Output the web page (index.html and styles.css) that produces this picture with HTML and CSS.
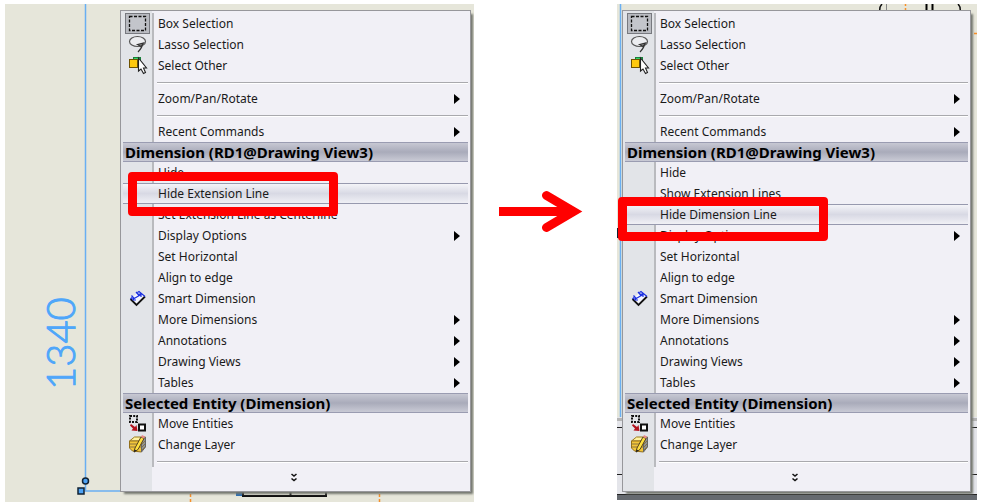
FILE: index.html
```
<!DOCTYPE html>
<html lang="en">
<head>
  <meta charset="UTF-8" />
  <meta name="viewport" content="width=device-width, initial-scale=1.0"/>
  <title>Hide Dimension Line</title>
  <link rel="stylesheet" href="styles.css">
</head>
<body>
  <!-- Shared icons -->
  <svg class="sprite" aria-hidden="true">
    <symbol id="box" viewBox="0 0 25 21">
      <rect x="0.5" y="0.5" width="24" height="20" fill="#b9bbc1" stroke="#77797f"/>
      <rect x="4.500" y="3.500" width="16" height="14" fill="#c3c5cb" stroke="#111" stroke-width="1.300" stroke-dasharray="3 1.500"/>
    </symbol>
    <symbol id="lasso" viewBox="0 0 25 21">
      <ellipse cx="12.500" cy="7.500" rx="8" ry="5" fill="#ecedf0" stroke="#555" stroke-width="1.200"/>
      <path d="M12.500 10.500l6-1.500-2.500 3.500zM17.500 9.500c0 3-2 6-4.500 8.500" fill="#888" stroke="#333" stroke-width="1.200"/>
    </symbol>
    <symbol id="other" viewBox="0 0 25 21">
      <rect x="8.500" y="2.500" width="7" height="8" fill="#35d467" stroke="#18823b"/>
      <rect x="4.500" y="4.500" width="8" height="8" fill="#ffc90e" stroke="#6e5200"/>
      <path d="M13.500 3v13l2.500-2 2.500 4.500 2-1-2-4.500h3z" fill="#fff" stroke="#222" stroke-width="1.100"/>
    </symbol>
    <symbol id="smart" viewBox="0 0 25 21">
      <path d="M5.500 11L14 3.500l6 5-8.500 8.500z" fill="#f5f6ff"/>
      <path d="M20 8.500L11.500 17l-6-6" fill="none" stroke="#111" stroke-width="1.800"/>
      <path d="M5.500 11L7 9.500M12.500 4.500L14 3.500l6 5M7.500 11.500L16 6.500M6.500 7.500l3 3.500M11 4l3.500 4M8 9v3h3M13 6h3v3" fill="none" stroke="#1a2fe0" stroke-width="1.200"/>
    </symbol>
    <symbol id="move" viewBox="0 0 25 21">
      <rect x="5" y="3" width="7" height="6" fill="none" stroke="#111" stroke-width="2" stroke-dasharray="2 1.200"/>
      <path d="M6 11l4 3 1.500-2 1 6-6-.5 1.500-2-3-3z" fill="#b3121d"/>
      <rect x="14" y="11.500" width="6" height="6" fill="#fff" stroke="#111" stroke-width="2"/>
    </symbol>
    <symbol id="layer" viewBox="0 0 25 21">
      <path d="M4.500 7l5-4h11l-4 4z" fill="#fff2a0" stroke="#9b7a1d"/>
      <path d="M4.500 7h12v11l-9-1-3-3z" fill="#f3c63a" stroke="#94701a"/>
      <path d="M16.500 7l4-4v10l-4 5z" fill="#8e9296" stroke="#666"/>
      <path d="M5 10h11M5 13h11M17 10l3-3M17 13l3-3M17 16l3-3" stroke="#8a7440"/>
      <path d="M9 18l1-4 6-11 3 1.500-6 11z" fill="#ffdf3e" stroke="#56421a"/>
      <path d="M16 3l1-2 3 1.500-1 2z" fill="#e88a8a"/>
      <path d="M9 18.500l.5-3 2 1z" fill="#222"/>
    </symbol>
    <symbol id="more" viewBox="0 0 8 10">
      <path d="M1.500 1L4 3l2.500-2M1.500 5.500L4 7.500l2.500-2" fill="none" stroke="#111" stroke-width="1.600"/>
    </symbol>
  </svg>

  <main class="steps">
    <section class="drawing before">
      <svg class="sheet" width="469" height="498">
        <path d="M80.500 0v487H116" fill="none" stroke="#69aff2" stroke-width="1.500"/>
        <circle cx="80.500" cy="477" r="3" fill="#4ea3f5" stroke="#123" stroke-width="1.500"/>
        <rect x="73" y="484" width="6" height="6" fill="#4ea3f5" stroke="#123" stroke-width="1.500"/>
        <text class="dim-value" transform="translate(70 386) rotate(-90)">1340</text>
        <path d="M185.500 490v3M185.500 495v3M374.500 490v3M374.500 495v3" stroke="#f7902a" stroke-width="1.500"/>
        <rect x="231" y="486" width="7" height="6" fill="#2c6fb5"/>
        <path d="M238 484v8h83v-8M285.500 484v8" fill="none" stroke="#111" stroke-width="2"/>
      </svg>
      <ul class="menu">
        <li><button class="item"><svg class="icon"><use href="#box"/></svg>Box Selection</button></li>
        <li><button class="item"><svg class="icon"><use href="#lasso"/></svg>Lasso Selection</button></li>
        <li><button class="item"><svg class="icon"><use href="#other"/></svg>Select Other</button></li>
        <li class="separator"></li>
        <li><button class="item submenu">Zoom/Pan/Rotate</button></li>
        <li class="separator"></li>
        <li><button class="item submenu">Recent Commands</button></li>
        <li class="heading">Dimension (RD1@Drawing View3)</li>
        <li><button class="item">Hide</button></li>
        <li class="marked"><button class="item active">Hide Extension Line</button></li>
        <li><button class="item">Set Extension Line as Centerline</button></li>
        <li><button class="item submenu">Display Options</button></li>
        <li><button class="item">Set Horizontal</button></li>
        <li><button class="item">Align to edge</button></li>
        <li><button class="item"><svg class="icon"><use href="#smart"/></svg>Smart Dimension</button></li>
        <li><button class="item submenu">More Dimensions</button></li>
        <li><button class="item submenu">Annotations</button></li>
        <li><button class="item submenu">Drawing Views</button></li>
        <li><button class="item submenu">Tables</button></li>
        <li class="heading">Selected Entity (Dimension)</li>
        <li><button class="item"><svg class="icon"><use href="#move"/></svg>Move Entities</button></li>
        <li><button class="item"><svg class="icon"><use href="#layer"/></svg>Change Layer</button></li>
        <li class="separator"></li>
        <li><button class="expand" aria-label="Show more"><svg width="8" height="10"><use href="#more"/></svg></button></li>
      </ul>
    </section>

    <svg class="arrow" width="84" height="42" viewBox="0 0 84 42">
      <path d="M0 21.500h72" stroke="#f00" stroke-width="9"/>
      <path d="M47.500 5.500l27 16-27 16" fill="none" stroke="#f00" stroke-width="9" stroke-linecap="round"/>
    </svg>

    <section class="drawing after">
      <svg class="sheet" width="360" height="496">
        <path d="M3.500 0v413" stroke="#69aff2" stroke-width="1.500"/>
        <path d="M265 0q-3 3-2 8M341 0q3 3 2 8" fill="none" stroke="#111" stroke-width="1.500"/>
        <path d="M269.500 0v8" stroke="#888"/>
        <path d="M309.500 0v8M315.500 0v8" stroke="#000" stroke-width="2"/>
        <path d="M288.500 0v2M288.500 4v3M357 29.500h3" stroke="#f7902a" stroke-width="1.500"/>
        <rect x="0" y="224" width="4" height="10" fill="#123"/>
        <rect x="0" y="413" width="360" height="83" fill="#e4e5ea"/>
        <path d="M0 415.500h360" stroke="#b5b5b5" stroke-width="3"/>
        <path d="M0 423.500h360M0 470.500h360" stroke="#222"/>
        <rect x="0" y="490" width="360" height="6" fill="#666a70"/>
        <path d="M0 490.500h360" stroke="#222"/>
      </svg>
      <ul class="menu">
        <li><button class="item"><svg class="icon"><use href="#box"/></svg>Box Selection</button></li>
        <li><button class="item"><svg class="icon"><use href="#lasso"/></svg>Lasso Selection</button></li>
        <li><button class="item"><svg class="icon"><use href="#other"/></svg>Select Other</button></li>
        <li class="separator"></li>
        <li><button class="item submenu">Zoom/Pan/Rotate</button></li>
        <li class="separator"></li>
        <li><button class="item submenu">Recent Commands</button></li>
        <li class="heading">Dimension (RD1@Drawing View3)</li>
        <li><button class="item">Hide</button></li>
        <li><button class="item">Show Extension Lines</button></li>
        <li class="marked"><button class="item active">Hide Dimension Line</button></li>
        <li><button class="item submenu">Display Options</button></li>
        <li><button class="item">Set Horizontal</button></li>
        <li><button class="item">Align to edge</button></li>
        <li><button class="item"><svg class="icon"><use href="#smart"/></svg>Smart Dimension</button></li>
        <li><button class="item submenu">More Dimensions</button></li>
        <li><button class="item submenu">Annotations</button></li>
        <li><button class="item submenu">Drawing Views</button></li>
        <li><button class="item submenu">Tables</button></li>
        <li class="heading">Selected Entity (Dimension)</li>
        <li><button class="item"><svg class="icon"><use href="#move"/></svg>Move Entities</button></li>
        <li><button class="item"><svg class="icon"><use href="#layer"/></svg>Change Layer</button></li>
        <li class="separator"></li>
        <li><button class="expand" aria-label="Show more"><svg width="8" height="10"><use href="#more"/></svg></button></li>
      </ul>
    </section>
  </main>
</body>
</html>
```
FILE: styles.css
```
*,
*::before,
*::after {
  box-sizing: border-box;
}

body {
  margin: 0;
  background-color: #fff;
  font-family: "Noto Sans", "Open Sans", sans-serif;
  color: #1a1a1a;
}

.sprite {
  display: none;
}

.steps {
  display: grid;
  grid-template-columns: 469fr 143fr 360fr;
  align-items: start;
  padding: 4px 4px 0 5px;
}

.drawing {
  position: relative;
  overflow: hidden;
  background-color: #e6e6da;
}

.before {
  padding: 6px 3px 10px 115px;
}

.after {
  padding: 6px 6px 8px 5px;
}

/* model geometry lying behind the menu */
.sheet {
  position: absolute;
  top: 0;
  left: 0;
}

.dim-value {
  font-family: Lato, sans-serif;
  font-size: 40px;
  font-weight: 300;
  fill: #4ea6fa;
  stroke: #4ea6fa;
  stroke-width: 1px;
}

.arrow {
  justify-self: center;
  margin-top: 186px;
  margin-right: 10px;
}

.menu {
  position: relative;
  margin: 0;
  padding: 2px;
  list-style: none;
  border: 1px solid #97979b;
  background: linear-gradient(to right, #e2e4e8 31px, #f1f0f6 31px);
  box-shadow: 3px 3px 2px -1px #73766f;
}

.item {
  position: relative;
  display: flex;
  align-items: center;
  width: 100%;
  height: 21px;
  padding: 0 0 0 35px;
  border: 0;
  background: linear-gradient(to right, transparent 29px, #b9babe 29px, #b9babe 31px, transparent 31px);
  font-family: inherit;
  font-size: 12px;
  color: inherit;
  text-align: left;
  white-space: nowrap;
}

.icon {
  width: 25px;
  height: 21px;
  margin-left: -33px;
  margin-right: 8px;
}

.submenu::after {
  content: "";
  margin-left: auto;
  margin-right: 8px;
  border: 5px solid transparent;
  border-left: 6px solid #000;
  border-right: 0;
}

.active {
  border-top: 1px solid #9799ae;
  border-bottom: 1px solid #9799ae;
  background: linear-gradient(#f4f4f8, #d8d9e4 50%, #f0f0f5);
}

.separator {
  height: 12px;
  padding: 6px 0 0 34px;
  background: linear-gradient(to right, transparent 29px, #b9babe 29px, #b9babe 31px, transparent 31px);
}

.separator::before {
  content: "";
  display: block;
  border-top: 1px solid #a9a9ad;
  border-bottom: 1px solid #fff;
}

.heading {
  height: 20px;
  padding-left: 2px;
  border-top: 1px solid #9a9cb1;
  border-bottom: 1px solid #9a9cb1;
  background: linear-gradient(#c7c8d3, #a9abba 50%, #c9cad5);
  font-size: 15px;
  font-weight: 700;
  line-height: 18px;
  color: #000;
  white-space: nowrap;
}

.expand {
  display: flex;
  align-items: center;
  justify-content: center;
  width: 100%;
  height: 22px;
  padding: 0 4px 0 0;
  border: 0;
  background: none;
}

/* red marker round the command to pick */
.marked {
  position: relative;
  z-index: 1;
}

.marked::after {
  content: "";
  position: absolute;
  top: -11px;
  left: 5px;
  width: 210px;
  height: 44px;
  border: 9px solid #f00;
  border-radius: 4px;
}

.after .marked::after {
  top: -7px;
  left: -7px;
}
```
